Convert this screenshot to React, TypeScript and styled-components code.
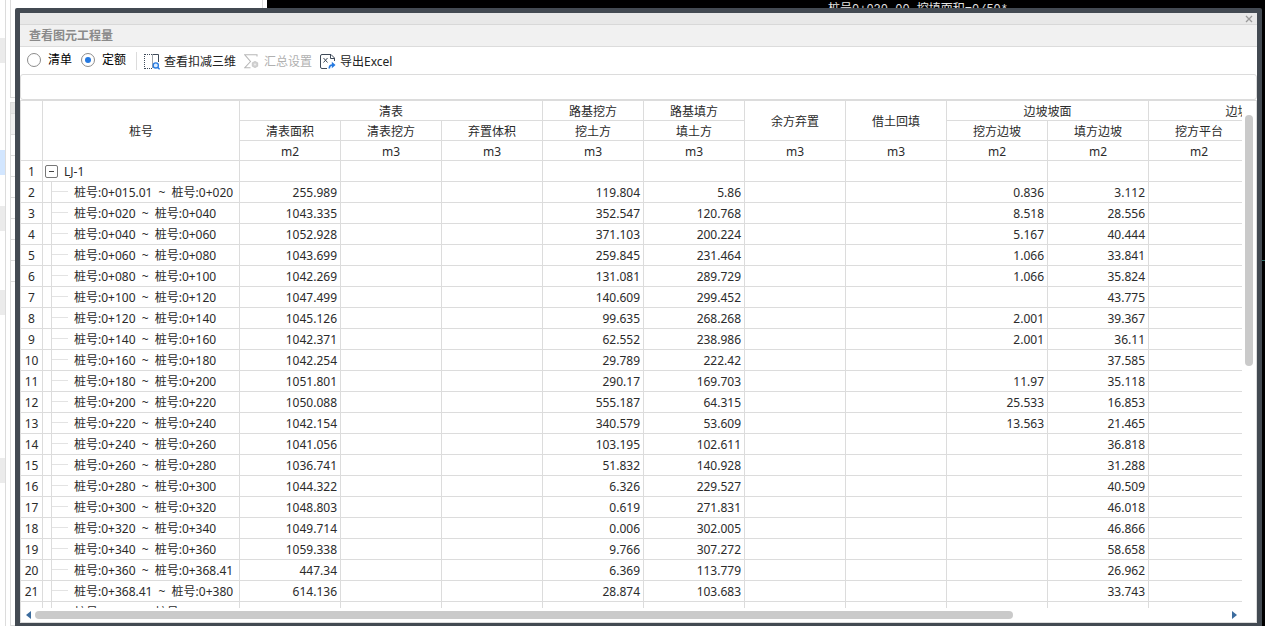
import React from "react";
import styled, { createGlobalStyle } from "styled-components";

const LINE = "#dcdcdc";
const FRAME = "#434a52";

const GlobalStyle = createGlobalStyle`
  * { box-sizing: border-box; }
  body {
    margin: 0;
    overflow: hidden;
    font-family: "Noto Sans", "Noto Sans CJK SC", sans-serif;
    font-size: 12px;
    line-height: 16px;
    color: #2b2b2b;
  }
`;

/* ---------- application behind the dialog ---------- */

const Desktop = styled.div`
  position: relative;
  display: flex;
  height: 100vh;
  background: #000;
  overflow: hidden;
`;

const Sidebar = styled.div`
  display: flex;
  flex: none;
  gap: 4px;
  width: 267px;
  padding-right: 4px;
  background: #fff;
`;

const NavStrip = styled.div`
  flex: none;
  width: 6px;
  border-right: 1px solid ${LINE};
`;

const NavItem = styled.div<{ $gap: number; $active?: boolean }>`
  height: 25px;
  margin-top: ${(p) => p.$gap}px;
  background: ${(p) => (p.$active ? "#d2e6ff" : "#ebebeb")};
`;

const SidePanels = styled.div`
  display: flex;
  flex: 1;
  flex-direction: column;
  gap: 4px;
`;

const SidePanel = styled.div<{ $grow?: boolean }>`
  flex: ${(p) => (p.$grow ? "1" : "none")};
  height: 98px;
  border: 1px solid ${LINE};
  border-top-width: ${(p) => (p.$grow ? "1px" : "0")};
`;

const SideRow = styled.div<{ $tone?: string; $small?: boolean }>`
  height: ${(p) => (p.$small ? 11 : 21)}px;
  border-bottom: 1px solid ${LINE};
  background: ${(p) => p.$tone || "#fff"};
`;

const DrawingArea = styled.div`
  position: relative;
  flex: 1;
`;

const DrawingLabel = styled.div`
  position: absolute;
  top: 2px;
  left: 561px;
  color: #e4e4e4;
  font-family: "Liberation Mono", "Noto Sans CJK SC", monospace;
  white-space: pre;
`;

const DrawingTick = styled.div`
  position: absolute;
  top: 260px;
  right: 0;
  width: 3px;
  height: 1px;
  background: #2f6f6a;
`;

/* ---------- dialog ---------- */

const Dialog = styled.section`
  position: absolute;
  inset: 8px 3px 0 15px;
  display: flex;
  flex-direction: column;
  border: 5px solid ${FRAME};
  border-bottom-width: 3px;
  border-radius: 2px 2px 0 0;
  background: #fff;
`;

const CaptionBar = styled.div`
  display: flex;
  flex: none;
  justify-content: flex-end;
  align-items: center;
  height: 12px;
  padding-right: 4px;
  border-bottom: 1px solid #d8d8d8;
  background: #e8e8e8;
`;

const CloseButton = styled.button`
  display: flex;
  padding: 0;
  border: 0;
  background: none;
  color: #999;
`;

const Title = styled.h1`
  flex: none;
  height: 22px;
  margin: 0;
  padding-left: 9px;
  border-bottom: 1px solid ${LINE};
  background: #f1f1f1;
  color: #8a8a8a;
  font-size: 12px;
  font-weight: 600;
  line-height: 22px;
`;

const Toolbar = styled.div`
  display: flex;
  flex: none;
  align-items: center;
  height: 27px;
  padding: 0 7px;
`;

const RadioLabel = styled.label`
  display: flex;
  align-items: center;
  gap: 7px;
  height: 24px;
  margin-right: 9px;
  padding-bottom: 2px;
  color: #000;
`;

const Radio = styled.input`
  appearance: none;
  display: grid;
  place-items: center;
  width: 14px;
  height: 14px;
  margin: 0;
  border: 1px solid #8c8c8c;
  border-radius: 50%;
  background: #fff;

  &:checked::before {
    content: "";
    width: 6px;
    height: 6px;
    border-radius: 50%;
    background: #2579e0;
  }
`;

const Divider = styled.span`
  width: 1px;
  height: 18px;
  margin: 0 7px 0 1px;
  background: ${LINE};
`;

const ToolButton = styled.button`
  display: flex;
  align-items: center;
  gap: 4px;
  height: 24px;
  margin-right: 8px;
  padding: 2px 0 0;
  border: 0;
  background: none;
  color: #222;
  font: inherit;

  &:disabled {
    color: #b0b0b0;
  }
`;

const Content = styled.div`
  display: flex;
  flex: 1;
  flex-direction: column;
  min-height: 0;
`;

const FilterBox = styled.div`
  flex: none;
  height: 26px;
  border: 1px solid ${LINE};
  border-radius: 3px;
`;

const Grid = styled.div`
  display: flex;
  flex: 1;
  flex-direction: column;
  min-height: 0;
  border: 1px solid ${LINE};
`;

const GridBody = styled.div`
  display: flex;
  flex: 1;
  min-height: 0;
`;

const Viewport = styled.div`
  flex: 1;
  min-width: 0;
  overflow: hidden;
`;

const Table = styled.table`
  width: 1330px;
  table-layout: fixed;
  border-collapse: separate;
  border-spacing: 0;
`;

const Col = styled.col<{ $w: number }>`
  width: ${(p) => p.$w}px;
`;

const HeadCell = styled.th`
  height: 20px;
  padding: 3px 0 0;
  border-right: 1px solid ${LINE};
  border-bottom: 1px solid ${LINE};
  font-weight: 400;
  text-align: center;
  white-space: nowrap;
`;

const Cell = styled.td`
  height: 21px;
  padding: 2px 3px 0;
  border-right: 1px solid ${LINE};
  border-bottom: 1px solid ${LINE};
  line-height: 18px;
  text-align: right;
  white-space: nowrap;
`;

const IndexCell = styled(Cell).attrs({ as: "th", scope: "row" })`
  padding: 2px 0 0;
  font-weight: 400;
  text-align: center;
`;

const NameCell = styled(Cell)`
  padding: 0;
  text-align: left;
`;

const NameContent = styled.div<{ $root?: boolean }>`
  display: flex;
  align-items: center;
  gap: 6px;
  height: 20px;
  padding-left: ${(p) => (p.$root ? 2 : 8)}px;
`;

const NameText = styled.span`
  padding-top: 2px;
`;

const Tilde = styled.span`
  margin: 0 3px;
`;

const Toggle = styled.button`
  display: grid;
  place-items: center;
  width: 13px;
  height: 13px;
  padding: 0;
  border: 1px solid #777;
  border-radius: 2px;
  background: #fff;

  &::before {
    content: "";
    width: 5px;
    height: 1px;
    background: #444;
  }
`;

const Branch = styled.span`
  display: flex;
  width: 17px;
  height: 20px;
  padding-top: 9px;
  border-left: 1px solid ${LINE};

  &::before {
    content: "";
    flex: 1;
    height: 1px;
    background: #e3e3e3;
  }
`;

const VerticalTrack = styled.div`
  flex: none;
  width: 14px;
  padding: 14px 3px 0;
`;

const VerticalThumb = styled.div`
  width: 8px;
  height: 51%;
  border-radius: 4px;
  background: #cacaca;
`;

const HorizontalBar = styled.div`
  display: flex;
  flex: none;
  align-items: center;
  gap: 4px;
  height: 14px;
  padding: 0 19px 0 5px;
`;

const HorizontalTrack = styled.div`
  flex: 1;
`;

const HorizontalThumb = styled.div`
  width: 82%;
  height: 8px;
  border-radius: 4px;
  background: #cacaca;
`;

const ArrowButton = styled.button`
  display: flex;
  padding: 0;
  border: 0;
  background: none;
`;

/* ---------- icons ---------- */

const CloseIcon = () => (
  <svg width="8" height="8" viewBox="0 0 8 8" fill="none" stroke="currentColor" strokeWidth="1.3">
    <path d="M1 1l6 6M7 1L1 7" />
  </svg>
);

const View3dIcon = () => (
  <svg width="16" height="16" viewBox="0 0 16 16" fill="none">
    <path d="M.5 0v16M1 .5h8M1 14.5h8" stroke="#3e4a59" strokeDasharray="1 1" />
    <path d="M8.5 .5v14" stroke="#3e4a59" strokeDasharray="1 1" />
    <path d="M9 .5h5.5V8" stroke="#3e4a59" />
    <circle cx="11.8" cy="11.4" r="2.6" fill="#d9ebff" stroke="#2579e0" strokeWidth="1.3" />
    <path d="M13.6 13.2l2 2.2" stroke="#2579e0" strokeWidth="1.4" />
  </svg>
);

const SumIcon = () => (
  <svg width="16" height="16" viewBox="0 0 16 16" fill="none">
    <path d="M13 2.5V.8H.8L6.500 7.500L.8 13.700h5.700" stroke="#b8b8b8" strokeWidth="1.1" />
    <path d="M11 7.500l2.700 1.300v3.400L11 13.500l-2.700-1.300V8.800z" fill="#d2d2d2" stroke="#c8c8c8" />
    <circle cx="11" cy="10.500" r="1" fill="#eee" />
  </svg>
);

const ExportIcon = () => (
  <svg width="16" height="16" viewBox="0 0 16 16" fill="none">
    <path d="M7 14.5H2A1.5 1.5 0 0 1 .5 13V2A1.5 1.5 0 0 1 2 .5h9L14.5 4v3M10.5 .5V4.5h4" stroke="#3e4a59" />
    <path d="M3.5 4l4 4.5M7.5 4l-4 4.5" stroke="#3e4a59" />
    <path d="M9.3 14.5c0-2.600 1-3.500 3.200-3.500" stroke="#2579e0" strokeWidth="1.7" />
    <path d="M11.800 7.800l3.700 3.200l-3.700 3.200z" fill="#2579e0" />
  </svg>
);

const Arrow = ({ d }: { d: string }) => (
  <svg width="5" height="8" viewBox="0 0 5 8">
    <path d={d} fill="#3c6c9e" />
  </svg>
);

/* ---------- data ---------- */

type Group = { name: string; children: [string, string][]; merged?: boolean };

const groups: Group[] = [
  { name: "清表", children: [["清表面积", "m2"], ["清表挖方", "m3"], ["弃置体积", "m3"]] },
  { name: "路基挖方", children: [["挖土方", "m3"]] },
  { name: "路基填方", children: [["填土方", "m3"]] },
  { name: "余方弃置", children: [["", "m3"]], merged: true },
  { name: "借土回填", children: [["", "m3"]], merged: true },
  { name: "边坡坡面", children: [["挖方边坡", "m2"], ["填方边坡", "m2"]] },
  { name: "边坡平台", children: [["挖方平台", "m2"], ["", ""]] },
];

const leaves = groups.flatMap((g) => g.children);
const subheads = groups.filter((g) => !g.merged).flatMap((g) => g.children);

// from, to, cleared area, cut, fill, cut slope, fill slope
const rows: string[][] = [
  ["0+015.01", "0+020", "255.989", "119.804", "5.86", "0.836", "3.112"],
  ["0+020", "0+040", "1043.335", "352.547", "120.768", "8.518", "28.556"],
  ["0+040", "0+060", "1052.928", "371.103", "200.224", "5.167", "40.444"],
  ["0+060", "0+080", "1043.699", "259.845", "231.464", "1.066", "33.841"],
  ["0+080", "0+100", "1042.269", "131.081", "289.729", "1.066", "35.824"],
  ["0+100", "0+120", "1047.499", "140.609", "299.452", "", "43.775"],
  ["0+120", "0+140", "1045.126", "99.635", "268.268", "2.001", "39.367"],
  ["0+140", "0+160", "1042.371", "62.552", "238.986", "2.001", "36.11"],
  ["0+160", "0+180", "1042.254", "29.789", "222.42", "", "37.585"],
  ["0+180", "0+200", "1051.801", "290.17", "169.703", "11.97", "35.118"],
  ["0+200", "0+220", "1050.088", "555.187", "64.315", "25.533", "16.853"],
  ["0+220", "0+240", "1042.154", "340.579", "53.609", "13.563", "21.465"],
  ["0+240", "0+260", "1041.056", "103.195", "102.611", "", "36.818"],
  ["0+260", "0+280", "1036.741", "51.832", "140.928", "", "31.288"],
  ["0+280", "0+300", "1044.322", "6.326", "229.527", "", "40.509"],
  ["0+300", "0+320", "1048.803", "0.619", "271.831", "", "46.018"],
  ["0+320", "0+340", "1049.714", "0.006", "302.005", "", "46.866"],
  ["0+340", "0+360", "1059.338", "9.766", "307.272", "", "58.658"],
  ["0+360", "0+368.41", "447.34", "6.369", "113.779", "", "26.962"],
  ["0+368.41", "0+380", "614.136", "28.874", "103.683", "", "33.743"],
  ["0+380", "0+400", "", "", "", "", ""],
];

const toCells = ([, , area, cut, fill, cutSlope, fillSlope]: string[]) => [
  area, "", "", cut, fill, "", "", cutSlope, fillSlope, "", "",
];

const QuantityTable = () => (
  <Table>
    <colgroup>
      <Col $w={22} />
      <Col $w={197} />
      {leaves.map((_, i) => (
        <Col key={i} $w={101} />
      ))}
    </colgroup>
    <thead>
      <tr>
        <HeadCell rowSpan={3} />
        <HeadCell rowSpan={3}>桩号</HeadCell>
        {groups.map((g) => (
          <HeadCell key={g.name} colSpan={g.children.length} rowSpan={g.merged ? 2 : 1}>
            {g.name}
          </HeadCell>
        ))}
      </tr>
      <tr>
        {subheads.map(([name], i) => (
          <HeadCell key={i}>{name}</HeadCell>
        ))}
      </tr>
      <tr>
        {leaves.map(([, unit], i) => (
          <HeadCell key={i}>{unit}</HeadCell>
        ))}
      </tr>
    </thead>
    <tbody>
      <tr>
        <IndexCell>1</IndexCell>
        <NameCell>
          <NameContent $root>
            <Toggle type="button" aria-label="折叠" />
            <NameText>LJ-1</NameText>
          </NameContent>
        </NameCell>
        {leaves.map((_, i) => (
          <Cell key={i} />
        ))}
      </tr>
      {rows.map((row, r) => (
        <tr key={r}>
          <IndexCell>{r + 2}</IndexCell>
          <NameCell>
            <NameContent>
              <Branch />
              <NameText>
                桩号:{row[0]} <Tilde>~</Tilde> 桩号:{row[1]}
              </NameText>
            </NameContent>
          </NameCell>
          {toCells(row).map((value, i) => (
            <Cell key={i}>{value}</Cell>
          ))}
        </tr>
      ))}
    </tbody>
  </Table>
);

export default function App() {
  return (
    <>
      <GlobalStyle />
      <Desktop>
        <Sidebar>
          <NavStrip>
            <NavItem $gap={38} />
            <NavItem $gap={87} $active />
            <NavItem $gap={31} />
            <NavItem $gap={59} />
            <NavItem $gap={143} />
          </NavStrip>
          <SidePanels>
            <SidePanel />
            <SidePanel $grow>
              <SideRow $small $tone="#e6e6e6" />
              <SideRow $tone="#f1f1f1" />
              {Array.from({ length: 7 }, (_, i) => (
                <SideRow key={i} />
              ))}
            </SidePanel>
          </SidePanels>
        </Sidebar>
        <DrawingArea>
          <DrawingLabel>桩号0+020.00 挖填面积=0/50*</DrawingLabel>
          <DrawingTick />
        </DrawingArea>

        <Dialog role="dialog" aria-labelledby="dialog-title">
          <CaptionBar>
            <CloseButton type="button" aria-label="关闭">
              <CloseIcon />
            </CloseButton>
          </CaptionBar>
          <Title id="dialog-title">查看图元工程量</Title>
          <Toolbar>
            <RadioLabel>
              <Radio type="radio" name="mode" />
              清单
            </RadioLabel>
            <RadioLabel>
              <Radio type="radio" name="mode" defaultChecked />
              定额
            </RadioLabel>
            <Divider />
            <ToolButton type="button">
              <View3dIcon />
              查看扣减三维
            </ToolButton>
            <ToolButton type="button" disabled>
              <SumIcon />
              汇总设置
            </ToolButton>
            <ToolButton type="button">
              <ExportIcon />
              导出Excel
            </ToolButton>
          </Toolbar>
          <Content>
            <FilterBox />
            <Grid>
              <GridBody>
                <Viewport>
                  <QuantityTable />
                </Viewport>
                <VerticalTrack>
                  <VerticalThumb />
                </VerticalTrack>
              </GridBody>
              <HorizontalBar>
                <ArrowButton type="button" aria-label="向左滚动">
                  <Arrow d="M5 0v8L0 4z" />
                </ArrowButton>
                <HorizontalTrack>
                  <HorizontalThumb />
                </HorizontalTrack>
                <ArrowButton type="button" aria-label="向右滚动">
                  <Arrow d="M0 0v8l5-4z" />
                </ArrowButton>
              </HorizontalBar>
            </Grid>
          </Content>
        </Dialog>
      </Desktop>
    </>
  );
}
